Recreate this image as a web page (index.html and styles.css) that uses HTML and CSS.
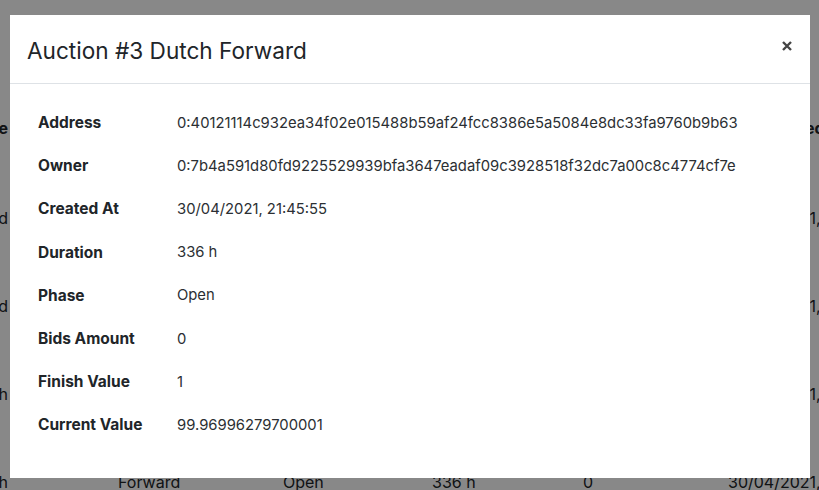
FILE: index.html
```html
<!DOCTYPE html>
<html lang="en">
<head>
<meta charset="utf-8">
<title>Auction #3 Dutch Forward</title>
<link rel="stylesheet" href="styles.css">
</head>
<body>
<div class="page">
  <div class="list">
    <div class="row head">
      <div class="c c1">Type</div><div class="c c2">Kind</div><div class="c c3">Phase</div><div class="c c4">Duration</div><div class="c c5">Bids</div><div class="c c6">Selected</div>
    </div>
    <div class="row">
      <div class="c c1">Blind</div><div class="c c2">Forward</div><div class="c c3">Open</div><div class="c c4">336 h</div><div class="c c5">0</div><div class="c c6">30/04/2021, 21:40:12</div>
    </div>
    <div class="row">
      <div class="c c1">Blind</div><div class="c c2">Reverse</div><div class="c c3">Open</div><div class="c c4">336 h</div><div class="c c5">0</div><div class="c c6">30/04/2021, 21:42:31</div>
    </div>
    <div class="row">
      <div class="c c1">Dutch</div><div class="c c2">Forward</div><div class="c c3">Open</div><div class="c c4">336 h</div><div class="c c5">0</div><div class="c c6">30/04/2021, 21:45:55</div>
    </div>
    <div class="row">
      <div class="c c1">Dutch</div><div class="c c2">Forward</div><div class="c c3">Open</div><div class="c c4">336 h</div><div class="c c5">0</div><div class="c c6">30/04/2021, 21:47:03</div>
    </div>
  </div>
</div>

<div class="backdrop"></div>

<div class="modal">
  <div class="modal-header">
    <h5 class="modal-title">Auction #3 Dutch Forward</h5>
    <button class="close" type="button" aria-label="Close">
      <svg width="10" height="10" viewBox="0 0 10 10"><path d="M1 1 L9 9 M9 1 L1 9" stroke="#444" stroke-width="2.4" fill="none"/></svg>
    </button>
  </div>
  <div class="modal-body">
    <table class="details">
      <tr><th>Address</th><td>0:40121114c932ea34f02e015488b59af24fcc8386e5a5084e8dc33fa9760b9b63</td></tr>
      <tr><th>Owner</th><td>0:7b4a591d80fd9225529939bfa3647eadaf09c3928518f32dc7a00c8c4774cf7e</td></tr>
      <tr><th>Created At</th><td>30/04/2021, 21:45:55</td></tr>
      <tr><th>Duration</th><td>336 h</td></tr>
      <tr><th>Phase</th><td>Open</td></tr>
      <tr><th>Bids Amount</th><td>0</td></tr>
      <tr><th>Finish Value</th><td>1</td></tr>
      <tr><th>Current Value</th><td>99.96996279700001</td></tr>
    </table>
  </div>
</div>
</body>
</html>
```

FILE: styles.css
```css
* { box-sizing: border-box; }
html, body {
  margin: 0;
  padding: 0;
  height: 100%;
  overflow: hidden;
}
body {
  background: #fff;
  color: #212529;
  font-family: Inter, "Noto Sans", sans-serif;
  font-size: 16px;
}

.page {
  margin-left: -38px;
  padding-top: 116px;
}
.list {
  display: flex;
  flex-direction: column;
}
.row {
  display: grid;
  grid-template-columns: 156px 165px 149px 151px 145px 200px;
  height: 88px;
  line-height: 24px;
}
.row.head {
  height: 90px;
  font-weight: 700;
}
.c { white-space: nowrap; }
.c1 { text-align: right; }
.row .c1 { width: 46px; }
.c6 { white-space: normal; width: 100px; }
.row.head .c6 { padding-left: 28px; white-space: nowrap; }

.backdrop {
  position: fixed;
  inset: 0;
  background: rgba(0, 0, 0, 0.467);
}

.modal {
  position: fixed;
  top: 15px;
  left: 10px;
  width: 800px;
  height: 463px;
  background: #fff;
  color: #212529;
}
.modal-header {
  display: flex;
  align-items: center;
  justify-content: space-between;
  height: 69px;
  padding: 2px 17px 0 17px;
  border-bottom: 1px solid #dee2e6;
}
.modal-title {
  margin: 0;
  font-size: 22.6px;
  font-weight: 400;
  color: #212529;
}
.close {
  border: 0;
  background: none;
  padding: 0;
  margin: -8px 1px 0 0;
  width: 10px;
  height: 10px;
  display: flex;
  cursor: pointer;
}

.modal-body {
  padding: 17px 16px 16px;
}
.details {
  border-collapse: collapse;
}
.details th, .details td {
  height: 43.2px;
  padding: 0 12px;
  text-align: left;
  vertical-align: middle;
  white-space: nowrap;
}
.details th {
  width: 139px;
  font-size: 15.5px;
  font-weight: 700;
  color: #212529;
}
.details td {
  font-size: 14.8px;
  font-weight: 400;
  color: #2b2f33;
}
```
